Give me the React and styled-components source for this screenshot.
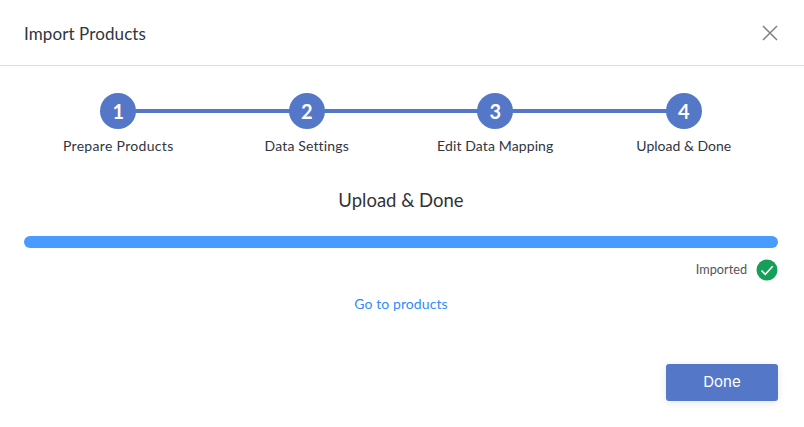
import React from 'react';
import styled, { createGlobalStyle } from 'styled-components';

const GlobalStyle = createGlobalStyle`
  html, body {
    margin: 0;
    padding: 0;
    background: #fff;
    font-family: Lato, "Liberation Sans", sans-serif;
  }
`;

const STEPS = [
  { label: 'Prepare Products', tracking: 0.32 },
  { label: 'Data Settings', tracking: 0.15 },
  { label: 'Edit Data Mapping', tracking: 0.12 },
  { label: 'Upload & Done', tracking: 0 },
];

const App = () => {
  return (
    <Modal>
      <GlobalStyle />
      <Header>
        <Title>Import Products</Title>
        <CloseButton aria-label="Close">
          <svg width="16" height="16" viewBox="0 0 16 16" fill="none" stroke="#808080" strokeWidth="1.5">
            <path d="M1 1l14 14M15 1L1 15" />
          </svg>
        </CloseButton>
      </Header>
      <Body>
        <Stepper>
          {STEPS.map((step, i) => (
            <Step key={step.label} $first={i === 0}>
              <Circle>{i + 1}</Circle>
              <StepLabel $tracking={step.tracking}>{step.label}</StepLabel>
            </Step>
          ))}
        </Stepper>
        <SectionTitle>Upload &amp; Done</SectionTitle>
        <ProgressBar />
        <Status>
          <StatusText>Imported</StatusText>
          <svg width="22" height="22" viewBox="0 0 22 22">
            <circle cx="11" cy="11" r="10.5" fill="#15a05a" />
            <path d="M5.5 11.5l3.8 3.8 7.4-8" fill="none" stroke="#fff" strokeWidth="1.6" />
          </svg>
        </Status>
        <GoLink href="#">Go to products</GoLink>
        <Footer>
          <DoneButton>Done</DoneButton>
        </Footer>
      </Body>
    </Modal>
  );
};

const Modal = styled.div`
  width: 804px;
  height: 427px;
  background: #fff;
  overflow: hidden;
`;

const Header = styled.div`
  height: 65px;
  border-bottom: 1px solid #ddd;
  padding: 0 26px 0 24px;
  display: flex;
  align-items: center;
  justify-content: space-between;
`;

const Title = styled.h1`
  margin: 2px 0 0;
  font-size: 17px;
  font-weight: 400;
  letter-spacing: 0.1px;
  color: #2f3542;
`;

const CloseButton = styled.button`
  border: 0;
  background: none;
  padding: 0;
  display: flex;
  margin-top: 1px;
`;

const Body = styled.div`
  padding: 27px 26px 0 24px;
  display: flex;
  flex-direction: column;
`;

const Stepper = styled.div`
  display: grid;
  grid-template-columns: repeat(4, 1fr);
`;

const Step = styled.div`
  position: relative;
  display: flex;
  flex-direction: column;
  align-items: center;

  ${(p) => !p.$first && `
    &::before {
      content: '';
      position: absolute;
      top: 16px;
      right: 50%;
      width: 100%;
      height: 4px;
      background: #5577c8;
    }
  `}
`;

const Circle = styled.div`
  position: relative;
  z-index: 1;
  width: 36px;
  height: 36px;
  border-radius: 50%;
  background: #5577c8;
  color: #fff;
  font-size: 20px;
  font-weight: 700;
  display: flex;
  align-items: center;
  justify-content: center;
`;

const StepLabel = styled.div`
  margin-top: 7px;
  font-size: 14px;
  line-height: 20px;
  letter-spacing: ${(p) => p.$tracking}px;
  color: #2f3542;
`;

const SectionTitle = styled.h2`
  margin: 32px 0 0;
  text-align: center;
  font-size: 18.5px;
  line-height: 24px;
  font-weight: 400;
  color: #333;
`;

const ProgressBar = styled.div`
  margin-top: 24px;
  height: 12px;
  border-radius: 6px;
  background: #4a9bff;
`;

const Status = styled.div`
  margin-top: 11px;
  display: flex;
  align-items: center;
  justify-content: flex-end;
  gap: 9px;
`;

const StatusText = styled.span`
  font-size: 12.7px;
  line-height: 20px;
  margin-top: -2px;
  color: #555;
`;

const GoLink = styled.a`
  margin-top: 14px;
  align-self: center;
  font-size: 14px;
  line-height: 18px;
  letter-spacing: 0.1px;
  color: #2f8bff;
  text-decoration: none;
`;

const Footer = styled.div`
  margin-top: 51px;
  display: flex;
  justify-content: flex-end;
`;

const DoneButton = styled.button`
  width: 112px;
  height: 37px;
  padding: 0 0 3px;
  border: 0;
  border-radius: 3px;
  background: #5577c8;
  color: #fff;
  font-family: Inter, sans-serif;
  font-size: 15px;
  font-weight: 400;
  box-shadow: 0 2px 8px rgba(0, 0, 0, 0.1);
`;

export default App;
